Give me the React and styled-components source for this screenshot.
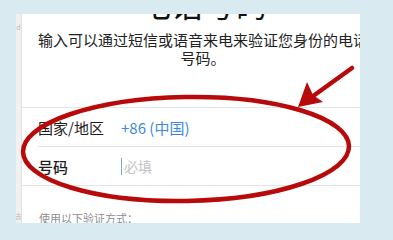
import React from "react";
import styled, { createGlobalStyle } from "styled-components";

const GlobalStyle = createGlobalStyle`
  html, body {
    margin: 0;
    padding: 0;
    background: #d9ebf1;
  }
  body {
    font-family: "Noto Sans CJK SC", "Noto Sans", sans-serif;
  }
`;

const Page = styled.div`
  position: relative;
  width: 393px;
  height: 226px;
  box-sizing: border-box;
  padding: 14px 0 0 16px;
  overflow: hidden;
`;

const Panel = styled.div`
  display: flex;
  width: 344px;
  height: 209px;
  overflow: hidden;
  background: #fff;
`;

const EdgeStrip = styled.div`
  flex: none;
  width: 6px;
  background: #f1f1f1;
  border-right: 1px solid #e2e2e2;
  display: flex;
  flex-direction: column;
  justify-content: space-between;
  align-items: center;
  padding: 9px 0 3px;
  box-sizing: border-box;
  overflow: hidden;
  font-size: 7px;
  line-height: 8px;
  color: #b9b9b9;
`;

const Screen = styled.div`
  flex: none;
  width: 362px;
  display: flex;
  flex-direction: column;
`;

const Title = styled.h1`
  margin: -29px 0 0;
  font-size: 32px;
  line-height: 36px;
  font-weight: 400;
  text-align: center;
  color: #111;
`;

const Subtitle = styled.p`
  margin: 10px 15.5px 0;
  font-size: 15px;
  line-height: 18px;
  text-align: center;
  color: #222;
`;

const Group = styled.div`
  margin-top: 40px;
  border-top: 1px solid #e4e4e4;
  border-bottom: 1px solid #e4e4e4;
`;

const Row = styled.div`
  display: grid;
  grid-template-columns: 83px 1fr;
  align-items: center;
  height: 38px;
  margin-left: 16px;
  font-size: 15px;

  & + & {
    border-top: 1px solid #e4e4e4;
  }
`;

const Label = styled.span`
  color: #1c1c1c;
  font-weight: ${(props) => (props.$strong ? 500 : 400)};
`;

const Value = styled.span`
  color: #3d8ad8;
`;

const Field = styled.span`
  display: flex;
  align-items: center;
  color: #c3c3c8;
  font-size: 14px;
`;

const Cursor = styled.span`
  width: 1px;
  height: 17px;
  margin-right: 2px;
  background: #7aa9e0;
`;

const Footer = styled.p`
  margin: 25px 0 0 17px;
  font-size: 11px;
  line-height: 14px;
  color: #8d8d92;
`;

const Marks = styled.svg`
  position: absolute;
  left: 0;
  top: 0;
  pointer-events: none;
`;

export default function App() {
  return (
    <>
      <GlobalStyle />
      <Page>
        <Panel>
          <EdgeStrip>
            <span>d</span>
            <span>去</span>
          </EdgeStrip>
          <Screen>
            <Title>电话号码</Title>
            <Subtitle>输入可以通过短信或语音来电来验证您身份的电话号码。</Subtitle>
            <Group>
              <Row>
                <Label>国家/地区</Label>
                <Value>+86 (中国)</Value>
              </Row>
              <Row>
                <Label $strong>号码</Label>
                <Field>
                  <Cursor />
                  必填
                </Field>
              </Row>
            </Group>
            <Footer>使用以下验证方式：</Footer>
          </Screen>
        </Panel>
        <Marks width="393" height="226" viewBox="0 0 393 226">
          <ellipse
            cx="186"
            cy="149"
            rx="163"
            ry="52"
            transform="rotate(-1 186 149)"
            fill="none"
            stroke="#b80a0a"
            strokeWidth="4.5"
          />
          <line
            x1="352"
            y1="68"
            x2="309"
            y2="99"
            stroke="#b80a0a"
            strokeWidth="4.5"
            strokeLinecap="round"
          />
          <polygon points="298,107 307,82 313,95 323,102" fill="#b80a0a" />
        </Marks>
      </Page>
    </>
  );
}
